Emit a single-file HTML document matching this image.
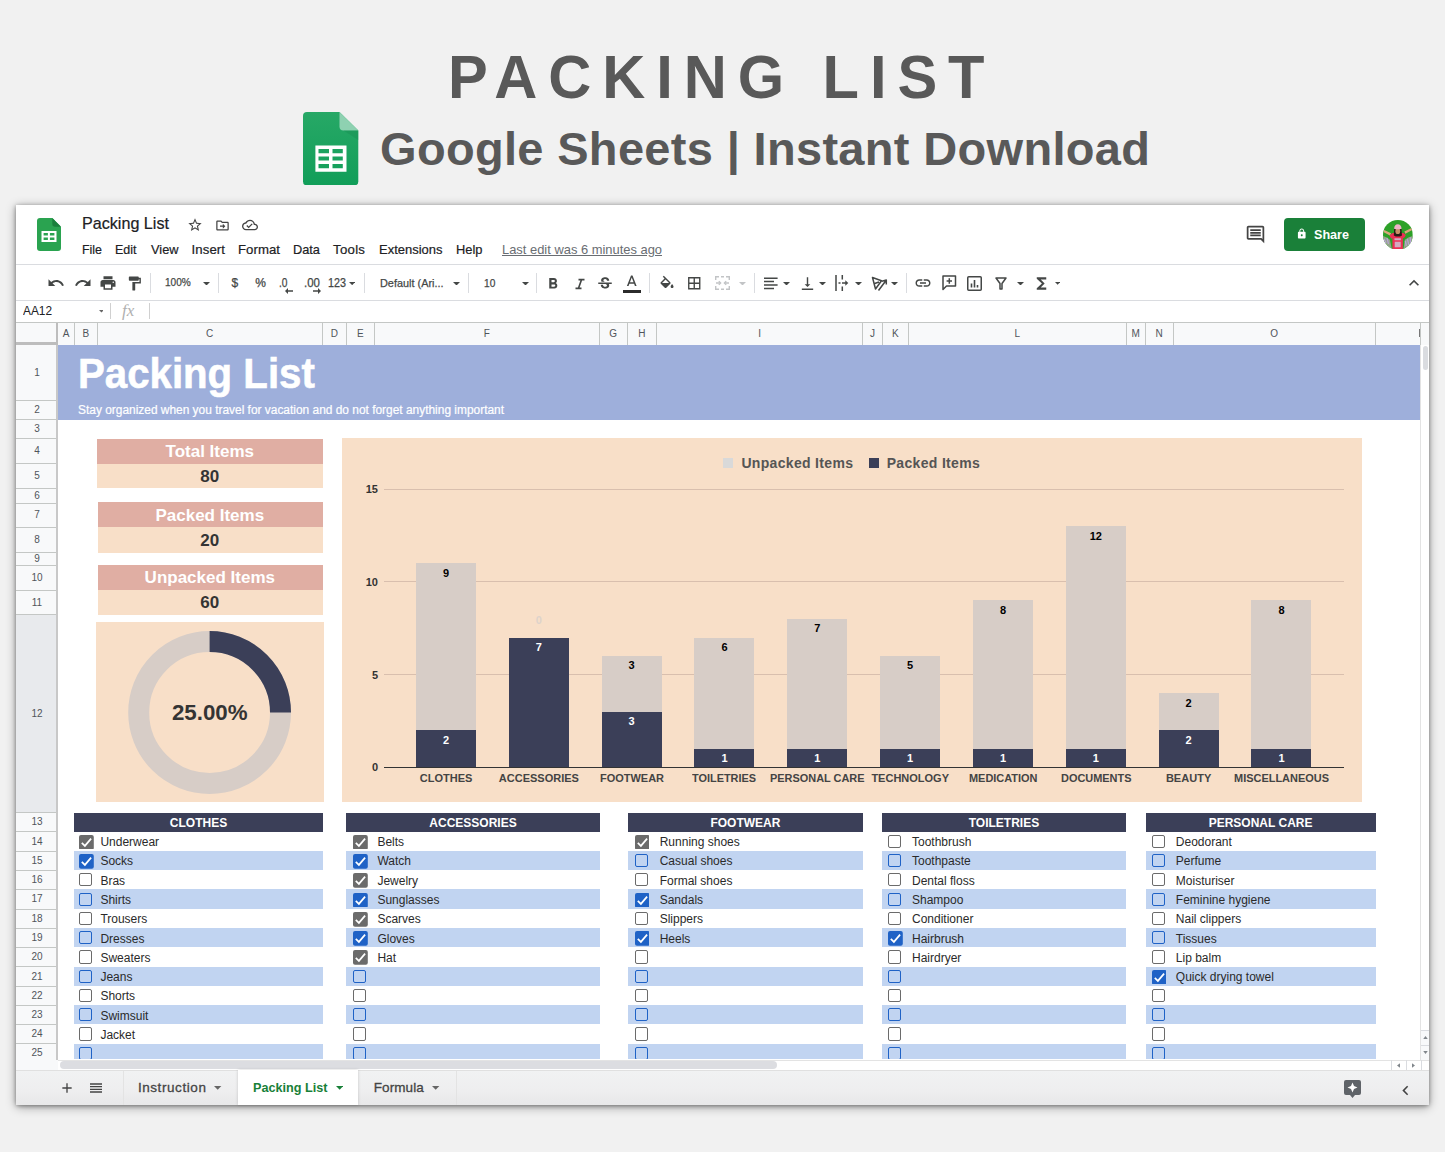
<!DOCTYPE html>
<html><head><meta charset="utf-8"><title>Packing List</title>
<style>
html,body{margin:0;padding:0}
body{width:1445px;height:1152px;position:relative;overflow:hidden;background:#f1f1f1;font-family:"Liberation Sans",Arial,sans-serif}
.t{position:absolute;white-space:nowrap;line-height:1}
.r{position:absolute}
</style></head><body>
<div class="t" style="top:47.39px;font-size:60.5px;color:#595959;font-weight:700;letter-spacing:11.117px;left:447.60px;transform:scaleX(0.9850);transform-origin:0 0;">PACKING LIST</div>
<div class="t" style="top:124.71px;font-size:47px;color:#595959;font-weight:700;letter-spacing:0.323px;left:380.00px;">Google Sheets | Instant Download</div>
<svg class="r" style="left:303.400px;top:111.600px" width="55.300" height="73.400" viewBox="0 0 55.300 73.400">
<defs><linearGradient id="gsh" x1="0" y1="0" x2="0" y2="1"><stop offset="0" stop-color="#27a866"/><stop offset="1" stop-color="#119e59"/></linearGradient></defs>
<path d="M4 0H36.500L55.300 18.500V69.400a4 4 0 0 1-4 4H4a4 4 0 0 1-4-4V4a4 4 0 0 1 4-4z" fill="url(#gsh)"/>
<path d="M36.500 0L55.300 18.500H40.500a4 4 0 0 1-4-4z" fill="#8ed1b1"/>
<path d="M40.500 18.500H55.300V28z" fill="#168a50" opacity=".35"/>
<path d="M12.400 33.400h31.100v26.400H12.400zM15.500 37.100v4.100h10.500v-4.100zm14 0v4.100h10.300v-4.100zM15.500 44.500v3.900h10.500v-3.900zm14 0v3.900h10.300v-3.900zM15.500 51.900v4.300h10.500v-4.300zm14 0v4.300h10.300v-4.300z" fill="#fff" fill-rule="evenodd"/>
</svg>
<div class="r" style="left:16px;top:205px;width:1413px;height:900px;background:#fff;border-radius:0 0 3px 3px;box-shadow:0 1px 4px rgba(0,0,0,.4),0 2px 11px rgba(0,0,0,.33)"></div>
<svg class="r" style="left:37px;top:218px" width="24" height="33" viewBox="0 0 24 33">
<path d="M3 0H15.300L24 8.700V30a3 3 0 0 1-3 3H3A3 3 0 0 1 0 30V3A3 3 0 0 1 3 0z" fill="#2aa350"/>
<path d="M15.300 0L24 8.700H18a2.700 2.700 0 0 1-2.700-2.700z" fill="#1a7f3c"/>
<path d="M4.500 13.100h15v10.800h-15zM6.600 14.900v2.500h4.300v-2.500zm6.300 0v2.500h4.500v-2.500zM6.600 19.400v2.500h4.300v-2.500zm6.300 0v2.500h4.500v-2.500z" fill="#fff" fill-rule="evenodd"/>
</svg>
<div class="t" style="top:216.45px;font-size:16.6px;color:#202124;left:82.00px;transform:scaleX(0.9721);transform-origin:0 0;-webkit-text-stroke:0.2px #202124;">Packing List</div>
<svg class="r" style="left:187.00px;top:217.00px;" width="16" height="16" viewBox="0 0 24 24" fill="#444" ><path d="M22 9.24l-7.19-.62L12 2 9.190 8.630 2 9.240l5.460 4.730L5.820 21 12 17.270 18.180 21l-1.630-7.030L22 9.240zM12 15.400l-3.760 2.270 1-4.280-3.320-2.880 4.380-.380L12 6.100l1.710 4.040 4.380.380-3.320 2.880 1 4.280L12 15.400z"/></svg>
<svg class="r" style="left:214.50px;top:217.50px;" width="15" height="15" viewBox="0 0 24 24" fill="#444" ><path d="M20 6h-8l-2-2H4c-1.100 0-2 .900-2 2v12c0 1.100.900 2 2 2h16c1.100 0 2-.900 2-2V8c0-1.100-.900-2-2-2zm0 12H4V6h5.170l2 2H20v10zm-7.500-1l4-4-4-4v3H8v2h4.500v3z"/></svg>
<svg class="r" style="left:242.00px;top:217.00px;" width="16" height="16" viewBox="0 0 24 24" fill="#444" ><path d="M19.350 10.040C18.670 6.590 15.640 4 12 4 9.110 4 6.600 5.640 5.350 8.040 2.340 8.360 0 10.910 0 14c0 3.310 2.690 6 6 6h13c2.760 0 5-2.240 5-5 0-2.640-2.050-4.780-4.650-4.960zM19 18H6c-2.210 0-4-1.790-4-4 0-2.050 1.530-3.760 3.560-3.970l1.070-.110.500-.950C8.080 7.140 9.940 6 12 6c2.620 0 4.880 1.860 5.390 4.430l.300 1.500 1.530.110c1.560.100 2.780 1.410 2.780 2.960 0 1.650-1.350 3-3 3zm-9-3.820l-2.090-2.090L6.500 13.500 10 17l6.010-6.010-1.410-1.410z"/></svg>
<div class="t" style="top:242.83px;font-size:13.2px;color:#202124;left:81.50px;transform:scaleX(0.9403);transform-origin:0 0;-webkit-text-stroke:0.2px #202124;">File</div>
<div class="t" style="top:242.83px;font-size:13.2px;color:#202124;left:115.00px;transform:scaleX(0.9452);transform-origin:0 0;-webkit-text-stroke:0.2px #202124;">Edit</div>
<div class="t" style="top:242.83px;font-size:13.2px;color:#202124;left:150.50px;transform:scaleX(0.9692);transform-origin:0 0;-webkit-text-stroke:0.2px #202124;">View</div>
<div class="t" style="top:242.83px;font-size:13.2px;color:#202124;letter-spacing:0.097px;left:191.50px;-webkit-text-stroke:0.2px #202124;">Insert</div>
<div class="t" style="top:242.83px;font-size:13.2px;color:#202124;letter-spacing:0.039px;left:238.00px;-webkit-text-stroke:0.2px #202124;">Format</div>
<div class="t" style="top:242.83px;font-size:13.2px;color:#202124;left:293.00px;transform:scaleX(0.9683);transform-origin:0 0;-webkit-text-stroke:0.2px #202124;">Data</div>
<div class="t" style="top:242.83px;font-size:13.2px;color:#202124;letter-spacing:0.296px;left:333.00px;-webkit-text-stroke:0.2px #202124;">Tools</div>
<div class="t" style="top:242.83px;font-size:13.2px;color:#202124;left:378.50px;transform:scaleX(0.9834);transform-origin:0 0;-webkit-text-stroke:0.2px #202124;">Extensions</div>
<div class="t" style="top:242.83px;font-size:13.2px;color:#202124;left:455.50px;transform:scaleX(0.9761);transform-origin:0 0;-webkit-text-stroke:0.2px #202124;">Help</div>
<div class="t" style="top:243.00px;font-size:13px;color:#696d72;left:502.00px;transform:scaleX(0.9929);transform-origin:0 0;text-decoration:underline;">Last edit was 6 minutes ago</div>
<svg class="r" style="left:1245.00px;top:223.50px;" width="21" height="21" viewBox="0 0 24 24" fill="#444" ><path d="M21.990 4c0-1.100-.890-2-1.990-2H4c-1.100 0-2 .900-2 2v12c0 1.100.900 2 2 2h14l4 4-.010-18zM20 4v13.170L18.830 16H4V4h16zM6 12h12v2H6zm0-3h12v2H6zm0-3h12v2H6z"/></svg>
<div class="r" style="left:1284px;top:218px;width:81px;height:33px;background:#1a8039;border-radius:4px"></div>
<svg class="r" style="left:1295.75px;top:228.25px;" width="11.5" height="11.5" viewBox="0 0 24 24" fill="#fff" ><path d="M18 8h-1V6c0-2.760-2.240-5-5-5S7 3.240 7 6v2H6c-1.100 0-2 .900-2 2v10c0 1.100.900 2 2 2h12c1.100 0 2-.900 2-2V10c0-1.100-.900-2-2-2zm-6 9c-1.100 0-2-.900-2-2s.900-2 2-2 2 .900 2 2-.900 2-2 2zm3.100-9H8.900V6c0-1.710 1.390-3.100 3.100-3.100 1.710 0 3.100 1.390 3.100 3.100v2z"/></svg>
<div class="t" style="top:227.57px;font-size:13.5px;color:#fff;font-weight:700;left:1313.50px;transform:scaleX(0.9328);transform-origin:0 0;">Share</div>
<svg class="r" style="left:1382.800px;top:219.700px" width="29.800" height="29.800" viewBox="0 0 30 30"><defs><clipPath id="av"><circle cx="15" cy="15" r="15"/></clipPath></defs>
<g clip-path="url(#av)"><rect width="30" height="30" fill="#2da128"/>
<path d="M0 16q4 1 7 4l2 10H0zM30 16q-5 1-8 4l-1.500 10H30z" fill="#93a58a"/>
<path d="M1 19l2 4M4 18l1.500 6M24.500 19l1.500 6M27.500 17.500l.500 6M22.500 21l1 5" stroke="#b9a3d6" stroke-width="1.300" fill="none"/>
<path d="M0.300 12.200l6.700 3.300 1.200-2.200-7-3.300zM29.500 10l-7 3.800-1-2.200 7.300-3.600z" fill="#d9a77c"/>
<path d="M6.500 15.500l3-2.300h11l2.500 2-2 3.300-1-.800V30H9.500V18l-1.200.800z" fill="#ee2f55"/>
<path d="M11.200 9h7.400l.500 6.500-2 1h-4.200l-2-1z" fill="#2a1d16"/>
<ellipse cx="14.900" cy="11.300" rx="2.400" ry="2.900" fill="#c98f66"/>
<path d="M11.200 8.800q.200-4.600 3.700-4.600t3.800 4.600q-3.800 1.200-7.500 0z" fill="#efb3c6"/>
<path d="M11.500 18.500h6.500v2h-6.500zM11.800 22h6v5.500h-6z" fill="#c9d6e6" opacity=".75"/>
</g></svg>
<div class="r" style="left:16.00px;top:264.00px;width:1413.00px;height:1.00px;background:#dadce0;"></div>
<div class="r" style="left:16.00px;top:299.70px;width:1413.00px;height:1.00px;background:#dadce0;"></div>
<div class="r" style="left:16.00px;top:321.50px;width:1413.00px;height:1.00px;background:#c4c7c5;"></div>
<svg class="r" style="left:47.20px;top:274.00px;" width="18" height="18" viewBox="0 0 24 24" fill="#444746" ><path d="M12.500 8c-2.650 0-5.050.990-6.900 2.600L2 7v9h9l-3.620-3.620c1.390-1.160 3.160-1.880 5.120-1.880 3.540 0 6.550 2.310 7.600 5.500l2.370-.780C21.080 11.030 17.150 8 12.500 8z"/></svg>
<svg class="r" style="left:73.90px;top:274.00px;" width="18" height="18" viewBox="0 0 24 24" fill="#444746" ><path d="M18.400 10.600C16.550 8.990 14.150 8 11.500 8c-4.650 0-8.580 3.030-9.960 7.220L3.900 16c1.050-3.190 4.050-5.500 7.600-5.500 1.950 0 3.730.720 5.120 1.880L13 16h9V7l-3.600 3.600z"/></svg>
<svg class="r" style="left:98.80px;top:274.00px;" width="18" height="18" viewBox="0 0 24 24" fill="#444746" ><path d="M19 8H5c-1.660 0-3 1.340-3 3v6h4v4h12v-4h4v-6c0-1.660-1.340-3-3-3zm-3 11H8v-5h8v5zm3-7c-.550 0-1-.450-1-1s.450-1 1-1 1 .450 1 1-.450 1-1 1zm-1-9H6v4h12V3z"/></svg>
<svg class="r" style="left:125.80px;top:274.50px;" width="17" height="17" viewBox="0 0 24 24" fill="#444746" ><path d="M18 4V3c0-.550-.450-1-1-1H5c-.550 0-1 .450-1 1v4c0 .550.450 1 1 1h12c.550 0 1-.450 1-1V6h1v4H9v11c0 .550.450 1 1 1h2c.550 0 1-.450 1-1v-9h8V4h-3z"/></svg>
<div class="r" style="left:149.90px;top:273.00px;width:1.00px;height:20.00px;background:#dadce0;"></div>
<div class="t" style="top:277.07px;font-size:11.5px;color:#444746;left:165.00px;transform:scaleX(0.8772);transform-origin:0 0;-webkit-text-stroke:0.25px #444746;">100%</div>
<svg class="r" style="left:203.20px;top:281.75px" width="7" height="3.5" viewBox="0 0 8 4"><path d="M0 0h8L4 4z" fill="#444746"/></svg>
<div class="r" style="left:217.70px;top:273.00px;width:1.00px;height:20.00px;background:#dadce0;"></div>
<div class="t" style="top:277.24px;font-size:12px;color:#444746;left:231.56px;-webkit-text-stroke:0.25px #444746;">$</div>
<div class="t" style="top:277.24px;font-size:12px;color:#444746;left:255.17px;-webkit-text-stroke:0.25px #444746;">%</div>
<div class="t" style="top:277.24px;font-size:12px;color:#444746;left:278.90px;transform:scaleX(0.8493);transform-origin:0 0;-webkit-text-stroke:0.25px #444746;">.0</div>
<div class="t" style="top:277.24px;font-size:12px;color:#444746;left:303.50px;transform:scaleX(0.9531);transform-origin:0 0;-webkit-text-stroke:0.25px #444746;">.00</div>
<svg class="r" style="left:284.5px;top:287.5px" width="8" height="6" viewBox="0 0 8 6"><path d="M3 0L0 3l3 3V3.700h5V2.300H3z" fill="#444746"/></svg>
<svg class="r" style="left:312.5px;top:287.5px" width="8" height="6" viewBox="0 0 8 6"><path d="M5 0l3 3-3 3V3.700H0V2.300h5z" fill="#444746"/></svg>
<div class="t" style="top:277.24px;font-size:12px;color:#444746;left:328.30px;transform:scaleX(0.8990);transform-origin:0 0;-webkit-text-stroke:0.25px #444746;">123</div>
<svg class="r" style="left:349.05px;top:281.93px" width="6.3" height="3.15" viewBox="0 0 8 4"><path d="M0 0h8L4 4z" fill="#444746"/></svg>
<div class="r" style="left:363.80px;top:273.00px;width:1.00px;height:20.00px;background:#dadce0;"></div>
<div class="t" style="top:277.67px;font-size:11.5px;color:#444746;left:379.70px;transform:scaleX(0.9463);transform-origin:0 0;-webkit-text-stroke:0.25px #444746;">Default (Ari...</div>
<svg class="r" style="left:453.00px;top:281.75px" width="7" height="3.5" viewBox="0 0 8 4"><path d="M0 0h8L4 4z" fill="#444746"/></svg>
<div class="r" style="left:468.30px;top:273.00px;width:1.00px;height:20.00px;background:#dadce0;"></div>
<div class="t" style="top:277.67px;font-size:11.5px;color:#444746;left:483.70px;transform:scaleX(0.8834);transform-origin:0 0;-webkit-text-stroke:0.25px #444746;">10</div>
<svg class="r" style="left:522.20px;top:281.75px" width="7" height="3.5" viewBox="0 0 8 4"><path d="M0 0h8L4 4z" fill="#444746"/></svg>
<div class="r" style="left:536.20px;top:273.00px;width:1.00px;height:20.00px;background:#dadce0;"></div>
<svg class="r" style="left:544.30px;top:274.50px;" width="18" height="18" viewBox="0 0 24 24" fill="#444746" ><path d="M15.600 10.790c.970-.670 1.650-1.770 1.650-2.790 0-2.260-1.750-4-4-4H7v14h7.040c2.090 0 3.710-1.700 3.710-3.790 0-1.520-.860-2.820-2.150-3.420zM10 6.500h3c.830 0 1.500.670 1.500 1.500s-.670 1.500-1.500 1.500h-3v-3zm3.500 9H10v-3h3.500c.830 0 1.500.670 1.500 1.500s-.670 1.500-1.500 1.500z"/></svg>
<svg class="r" style="left:570.50px;top:274.50px;" width="18" height="18" viewBox="0 0 24 24" fill="#444746" ><path d="M10 5v2.200h2.500l-3.300 9.600H6v2.200h8v-2.200h-2.500l3.300-9.600H18V5z"/></svg>
<svg class="r" style="left:596.00px;top:274.50px;" width="18" height="18" viewBox="0 0 24 24" fill="#444746" ><path d="M7.240 8.750c-.260-.480-.390-1.030-.390-1.670 0-.610.130-1.160.400-1.670.260-.500.630-.930 1.110-1.290.480-.350 1.050-.630 1.700-.830.660-.190 1.390-.290 2.180-.290.810 0 1.540.110 2.210.340.660.220 1.230.540 1.690.940.470.400.830.880 1.080 1.430.250.550.380 1.150.380 1.810h-3.010c0-.310-.050-.590-.150-.850-.090-.270-.240-.490-.440-.680-.200-.190-.450-.330-.750-.440-.300-.100-.660-.160-1.060-.160-.390 0-.740.040-1.030.130-.290.090-.530.210-.720.360-.190.160-.340.340-.440.550-.100.210-.150.430-.150.660 0 .480.250.880.740 1.210.380.250.770.480 1.410.700H7.390c-.050-.080-.110-.170-.150-.250zM21 12v-2H3v2h9.620c.180.070.400.140.550.200.370.170.660.340.870.510.210.170.350.360.430.570.070.200.110.430.110.690 0 .230-.050.450-.140.660-.090.200-.230.380-.420.530-.190.150-.420.260-.710.350-.290.080-.630.130-1.010.130-.430 0-.830-.040-1.180-.130s-.660-.230-.910-.420c-.250-.190-.450-.440-.590-.750-.140-.310-.250-.760-.250-1.210H6.400c0 .550.080 1.130.240 1.580.160.450.370.850.650 1.210.280.350.600.660.980.920.370.260.780.480 1.220.650.440.170.900.300 1.380.390.480.080.960.130 1.440.130.800 0 1.530-.090 2.180-.280s1.210-.450 1.670-.790c.460-.340.820-.770 1.070-1.270s.380-1.070.380-1.710c0-.600-.100-1.140-.310-1.610-.050-.110-.110-.230-.170-.330H21z"/></svg>
<svg class="r" style="left:624.85px;top:274.25px;" width="13.5" height="13.5" viewBox="3 1 18 18" fill="#444746" ><path d="M11 3L5.500 17h2.250l1.120-3h6.250l1.120 3h2.250L13 3h-2zm-1.380 9L12 5.670 14.380 12H9.620z"/></svg>
<div class="r" style="left:622.50px;top:290.30px;width:18.70px;height:3.00px;background:#2b2b2b;"></div>
<div class="r" style="left:649.40px;top:273.00px;width:1.00px;height:20.00px;background:#dadce0;"></div>
<svg class="r" style="left:659.00px;top:274.50px;" width="16" height="16" viewBox="1 -1 22 22" fill="#444746" ><path d="M16.560 8.940L7.620 0 6.210 1.410l2.380 2.380-5.150 5.150c-.590.590-.590 1.540 0 2.120l5.500 5.500c.290.290.680.440 1.060.440s.770-.150 1.060-.440l5.500-5.500c.590-.580.590-1.530 0-2.120zM5.210 10L10 5.210 14.790 10H5.210zM19 11.500s-2 2.170-2 3.500c0 1.100.900 2 2 2s2-.900 2-2c0-1.330-2-3.500-2-3.500z"/></svg>
<svg class="r" style="left:686.25px;top:274.75px;" width="16.5" height="16.5" viewBox="0 0 24 24" fill="#444746" ><path d="M3 3v18h18V3H3zm8 16H5v-6h6v6zm0-8H5V5h6v6zm8 8h-6v-6h6v6zm0-8h-6V5h6v6z"/></svg>
<svg class="r" style="left:715px;top:276px" width="15" height="14" viewBox="0 0 15 14" fill="none" stroke="#c2c4c6" stroke-width="1.400">
<path d="M0.700 4V0.700H4M6 0.700h3M11 0.700h3.300V4M0.700 10v3.300H4M6 13.300h3M11 13.300h3.300V10M1 7h4M14 7h-4"/><path d="M3.800 5.200L5.600 7 3.800 8.800M11.200 5.200L9.400 7l1.800 1.800" /></svg>
<svg class="r" style="left:739.30px;top:281.75px" width="7" height="3.5" viewBox="0 0 8 4"><path d="M0 0h8L4 4z" fill="#c2c4c6"/></svg>
<div class="r" style="left:754.00px;top:273.00px;width:1.00px;height:20.00px;background:#dadce0;"></div>
<svg class="r" style="left:764px;top:277px" width="14" height="13" viewBox="0 0 14 13" fill="none" stroke="#444746" stroke-width="1.500"><path d="M0 1.200h13.600M0 4.600h10M0 8h13.600M0 11.400h10"/></svg>
<svg class="r" style="left:783.10px;top:281.75px" width="7" height="3.5" viewBox="0 0 8 4"><path d="M0 0h8L4 4z" fill="#444746"/></svg>
<svg class="r" style="left:798.50px;top:274.50px;" width="17" height="17" viewBox="0 0 24 24" fill="#444746" ><path d="M16 13h-3V3h-2v10H8l4 4 4-4zM4 19v2h16v-2H4z"/></svg>
<svg class="r" style="left:818.90px;top:281.75px" width="7" height="3.5" viewBox="0 0 8 4"><path d="M0 0h8L4 4z" fill="#444746"/></svg>
<svg class="r" style="left:835px;top:275px" width="15" height="16" viewBox="0 0 15 16" fill="none" stroke="#444746" stroke-width="1.500">
<path d="M1 0v16M7.300 0v4.500M7.300 11.500V16M3.500 8h2M7 8h4"/><path d="M10.300 5.200L13.300 8l-3 2.800z" fill="#444746" stroke="none"/></svg>
<svg class="r" style="left:854.80px;top:281.75px" width="7" height="3.5" viewBox="0 0 8 4"><path d="M0 0h8L4 4z" fill="#444746"/></svg>
<svg class="r" style="left:870.500px;top:274.500px" width="17" height="17" viewBox="0 0 17 17" fill="none" stroke="#444746" stroke-width="1.500" stroke-linejoin="round">
<path d="M1.500 2.500l9 3.200-6 8.300zM3.700 8.500l4.300-1.500"/><path d="M7.500 15.500L15 5.500M15.300 9.500V5l-4.300 1.300"/></svg>
<svg class="r" style="left:890.60px;top:281.75px" width="7" height="3.5" viewBox="0 0 8 4"><path d="M0 0h8L4 4z" fill="#444746"/></svg>
<div class="r" style="left:905.60px;top:273.00px;width:1.00px;height:20.00px;background:#dadce0;"></div>
<svg class="r" style="left:914.20px;top:274.00px;" width="18" height="18" viewBox="0 0 24 24" fill="#444746" ><path d="M3.900 12c0-1.710 1.390-3.100 3.100-3.100h4V7H7c-2.760 0-5 2.240-5 5s2.240 5 5 5h4v-1.900H7c-1.710 0-3.100-1.390-3.100-3.100zM8 13h8v-2H8v2zm9-6h-4v1.900h4c1.710 0 3.100 1.390 3.100 3.100s-1.390 3.100-3.100 3.100h-4V17h4c2.760 0 5-2.240 5-5s-2.240-5-5-5z"/></svg>
<svg class="r" style="left:942px;top:275px" width="15" height="16" viewBox="0 0 15 16" fill="none" stroke="#444746" stroke-width="1.500" stroke-linejoin="round">
<path d="M1 1h12.500v10H4.500L1 14.500z"/><path d="M7.300 3.300v5.400M4.600 6h5.400"/></svg>
<svg class="r" style="left:967px;top:275.500px" width="15" height="15" viewBox="0 0 15 15" fill="none" stroke="#444746" stroke-width="1.500">
<rect x="0.750" y="0.750" width="13.500" height="13.500" rx="1"/><path d="M4.500 11.500V7.500M7.500 11.500V4M10.500 11.500V9" stroke-width="1.600"/></svg>
<svg class="r" style="left:995px;top:276.500px" width="12" height="13" viewBox="0 0 12 13" fill="none" stroke="#444746" stroke-width="1.500" stroke-linejoin="round">
<path d="M1 1h10L7 6.500v5.500H5V6.500z"/></svg>
<svg class="r" style="left:1017.40px;top:281.75px" width="7" height="3.5" viewBox="0 0 8 4"><path d="M0 0h8L4 4z" fill="#444746"/></svg>
<svg class="r" style="left:1031.80px;top:273.80px;" width="19" height="19" viewBox="0 0 24 24" fill="#444746" ><path d="M18 4H6v2l6.500 6L6 18v2h12v-3h-7l5-5-5-5h7z"/></svg>
<svg class="r" style="left:1054.58px;top:282.19px" width="5.25" height="2.625" viewBox="0 0 8 4"><path d="M0 0h8L4 4z" fill="#444746"/></svg>
<svg class="r" style="left:1404.00px;top:273.00px;" width="20" height="20" viewBox="0 0 24 24" fill="#444746" ><path d="M12 8l-6 6 1.410 1.410L12 10.830l4.590 4.580L18 14z"/></svg>
<div class="t" style="top:305.34px;font-size:12px;color:#202124;left:23.00px;transform:scaleX(0.9879);transform-origin:0 0;">AA12</div>
<svg class="r" style="left:98.55px;top:310.27px" width="4.9" height="2.45" viewBox="0 0 8 4"><path d="M0 0h8L4 4z" fill="#666"/></svg>
<div class="r" style="left:109.50px;top:303.00px;width:1.00px;height:16.00px;background:#d0d0d0;"></div>
<div class="t" style="top:302.11px;font-size:17px;color:#b0b0b0;left:122.00px;font-family:'Liberation Serif',serif;font-style:italic;">fx</div>
<div class="r" style="left:149.30px;top:303.00px;width:1.00px;height:16.00px;background:#d0d0d0;"></div>
<div class="r" style="left:16.00px;top:322.50px;width:1413.00px;height:22.00px;background:#f8f9fa;"></div>
<div class="r" style="left:73.80px;top:322.50px;width:1.00px;height:22.00px;background:#c4c7c5;"></div>
<div class="t" style="top:328.54px;font-size:10px;color:#50555a;left:62.82px;">A</div>
<div class="r" style="left:96.70px;top:322.50px;width:1.00px;height:22.00px;background:#c4c7c5;"></div>
<div class="t" style="top:328.54px;font-size:10px;color:#50555a;left:82.42px;">B</div>
<div class="r" style="left:321.70px;top:322.50px;width:1.00px;height:22.00px;background:#c4c7c5;"></div>
<div class="t" style="top:328.54px;font-size:10px;color:#50555a;left:206.09px;">C</div>
<div class="r" style="left:346.00px;top:322.50px;width:1.00px;height:22.00px;background:#c4c7c5;"></div>
<div class="t" style="top:328.54px;font-size:10px;color:#50555a;left:330.74px;">D</div>
<div class="r" style="left:373.70px;top:322.50px;width:1.00px;height:22.00px;background:#c4c7c5;"></div>
<div class="t" style="top:328.54px;font-size:10px;color:#50555a;left:357.02px;">E</div>
<div class="r" style="left:598.90px;top:322.50px;width:1.00px;height:22.00px;background:#c4c7c5;"></div>
<div class="t" style="top:328.54px;font-size:10px;color:#50555a;left:483.75px;">F</div>
<div class="r" style="left:626.50px;top:322.50px;width:1.00px;height:22.00px;background:#c4c7c5;"></div>
<div class="t" style="top:328.54px;font-size:10px;color:#50555a;left:609.31px;">G</div>
<div class="r" style="left:656.10px;top:322.50px;width:1.00px;height:22.00px;background:#c4c7c5;"></div>
<div class="t" style="top:328.54px;font-size:10px;color:#50555a;left:638.19px;">H</div>
<div class="r" style="left:862.30px;top:322.50px;width:1.00px;height:22.00px;background:#c4c7c5;"></div>
<div class="t" style="top:328.54px;font-size:10px;color:#50555a;left:758.31px;">I</div>
<div class="r" style="left:881.70px;top:322.50px;width:1.00px;height:22.00px;background:#c4c7c5;"></div>
<div class="t" style="top:328.54px;font-size:10px;color:#50555a;left:870.00px;">J</div>
<div class="r" style="left:908.10px;top:322.50px;width:1.00px;height:22.00px;background:#c4c7c5;"></div>
<div class="t" style="top:328.54px;font-size:10px;color:#50555a;left:892.07px;">K</div>
<div class="r" style="left:1125.50px;top:322.50px;width:1.00px;height:22.00px;background:#c4c7c5;"></div>
<div class="t" style="top:328.54px;font-size:10px;color:#50555a;left:1014.52px;">L</div>
<div class="r" style="left:1144.90px;top:322.50px;width:1.00px;height:22.00px;background:#c4c7c5;"></div>
<div class="t" style="top:328.54px;font-size:10px;color:#50555a;left:1131.53px;">M</div>
<div class="r" style="left:1172.50px;top:322.50px;width:1.00px;height:22.00px;background:#c4c7c5;"></div>
<div class="t" style="top:328.54px;font-size:10px;color:#50555a;left:1155.59px;">N</div>
<div class="r" style="left:1374.90px;top:322.50px;width:1.00px;height:22.00px;background:#c4c7c5;"></div>
<div class="t" style="top:328.54px;font-size:10px;color:#50555a;left:1270.31px;">O</div>
<div class="r" style="left:1420.00px;top:322.50px;width:1.00px;height:22.00px;background:#c4c7c5;"></div>
<div class="r" style="left:1418.50px;top:329.00px;width:1.00px;height:8.00px;background:#777;"></div>
<div class="r" style="left:16.00px;top:344.50px;width:40.00px;height:715.00px;background:#f8f9fa;"></div>
<div class="r" style="left:16.00px;top:400.00px;width:40.00px;height:1.00px;background:#c4c7c5;"></div>
<div class="t" style="top:367.64px;font-size:10px;color:#50555a;left:34.22px;">1</div>
<div class="r" style="left:16.00px;top:419.30px;width:40.00px;height:1.00px;background:#c4c7c5;"></div>
<div class="t" style="top:405.29px;font-size:10px;color:#50555a;left:34.22px;">2</div>
<div class="r" style="left:16.00px;top:437.70px;width:40.00px;height:1.00px;background:#c4c7c5;"></div>
<div class="t" style="top:424.14px;font-size:10px;color:#50555a;left:34.22px;">3</div>
<div class="r" style="left:16.00px;top:462.90px;width:40.00px;height:1.00px;background:#c4c7c5;"></div>
<div class="t" style="top:445.94px;font-size:10px;color:#50555a;left:34.22px;">4</div>
<div class="r" style="left:16.00px;top:488.00px;width:40.00px;height:1.00px;background:#c4c7c5;"></div>
<div class="t" style="top:471.09px;font-size:10px;color:#50555a;left:34.22px;">5</div>
<div class="r" style="left:16.00px;top:502.50px;width:40.00px;height:1.00px;background:#c4c7c5;"></div>
<div class="t" style="top:490.89px;font-size:10px;color:#50555a;left:34.22px;">6</div>
<div class="r" style="left:16.00px;top:527.10px;width:40.00px;height:1.00px;background:#c4c7c5;"></div>
<div class="t" style="top:510.44px;font-size:10px;color:#50555a;left:34.22px;">7</div>
<div class="r" style="left:16.00px;top:552.20px;width:40.00px;height:1.00px;background:#c4c7c5;"></div>
<div class="t" style="top:535.29px;font-size:10px;color:#50555a;left:34.22px;">8</div>
<div class="r" style="left:16.00px;top:564.70px;width:40.00px;height:1.00px;background:#c4c7c5;"></div>
<div class="t" style="top:554.09px;font-size:10px;color:#50555a;left:34.22px;">9</div>
<div class="r" style="left:16.00px;top:589.50px;width:40.00px;height:1.00px;background:#c4c7c5;"></div>
<div class="t" style="top:572.74px;font-size:10px;color:#50555a;left:31.44px;">10</div>
<div class="r" style="left:16.00px;top:614.30px;width:40.00px;height:1.00px;background:#c4c7c5;"></div>
<div class="t" style="top:597.53px;font-size:10px;color:#50555a;left:31.81px;">11</div>
<div class="r" style="left:16.00px;top:614.80px;width:40.00px;height:197.80px;background:#e8eaed;"></div>
<div class="r" style="left:16.00px;top:812.10px;width:40.00px;height:1.00px;background:#c4c7c5;"></div>
<div class="t" style="top:708.84px;font-size:10px;color:#50555a;left:31.44px;">12</div>
<div class="r" style="left:16.00px;top:831.38px;width:40.00px;height:1.00px;background:#c4c7c5;"></div>
<div class="t" style="top:817.38px;font-size:10px;color:#50555a;left:31.44px;">13</div>
<div class="r" style="left:16.00px;top:850.66px;width:40.00px;height:1.00px;background:#c4c7c5;"></div>
<div class="t" style="top:836.65px;font-size:10px;color:#50555a;left:31.44px;">14</div>
<div class="r" style="left:16.00px;top:869.94px;width:40.00px;height:1.00px;background:#c4c7c5;"></div>
<div class="t" style="top:855.93px;font-size:10px;color:#50555a;left:31.44px;">15</div>
<div class="r" style="left:16.00px;top:889.22px;width:40.00px;height:1.00px;background:#c4c7c5;"></div>
<div class="t" style="top:875.21px;font-size:10px;color:#50555a;left:31.44px;">16</div>
<div class="r" style="left:16.00px;top:908.50px;width:40.00px;height:1.00px;background:#c4c7c5;"></div>
<div class="t" style="top:894.49px;font-size:10px;color:#50555a;left:31.44px;">17</div>
<div class="r" style="left:16.00px;top:927.78px;width:40.00px;height:1.00px;background:#c4c7c5;"></div>
<div class="t" style="top:913.77px;font-size:10px;color:#50555a;left:31.44px;">18</div>
<div class="r" style="left:16.00px;top:947.06px;width:40.00px;height:1.00px;background:#c4c7c5;"></div>
<div class="t" style="top:933.05px;font-size:10px;color:#50555a;left:31.44px;">19</div>
<div class="r" style="left:16.00px;top:966.34px;width:40.00px;height:1.00px;background:#c4c7c5;"></div>
<div class="t" style="top:952.33px;font-size:10px;color:#50555a;left:31.44px;">20</div>
<div class="r" style="left:16.00px;top:985.62px;width:40.00px;height:1.00px;background:#c4c7c5;"></div>
<div class="t" style="top:971.61px;font-size:10px;color:#50555a;left:31.44px;">21</div>
<div class="r" style="left:16.00px;top:1004.90px;width:40.00px;height:1.00px;background:#c4c7c5;"></div>
<div class="t" style="top:990.89px;font-size:10px;color:#50555a;left:31.44px;">22</div>
<div class="r" style="left:16.00px;top:1024.18px;width:40.00px;height:1.00px;background:#c4c7c5;"></div>
<div class="t" style="top:1010.17px;font-size:10px;color:#50555a;left:31.44px;">23</div>
<div class="r" style="left:16.00px;top:1043.46px;width:40.00px;height:1.00px;background:#c4c7c5;"></div>
<div class="t" style="top:1029.45px;font-size:10px;color:#50555a;left:31.44px;">24</div>
<div class="t" style="top:1047.84px;font-size:10px;color:#50555a;left:31.44px;">25</div>
<div class="r" style="left:16.00px;top:322.50px;width:42.00px;height:22.00px;background:#f8f9fa;"></div>
<div class="r" style="left:55.50px;top:322.50px;width:2.50px;height:737.00px;background:#bdbdbd;"></div>
<div class="r" style="left:16.00px;top:342.00px;width:42.00px;height:2.50px;background:#bdbdbd;"></div>
<div class="r" style="left:55.50px;top:344.50px;width:2.50px;height:715.00px;background:#c8c8c8;"></div>
<div class="r" style="left:58.00px;top:344.50px;width:1362.50px;height:75.30px;background:#9eafdb;"></div>
<div class="t" style="top:351.90px;font-size:43px;color:#fff;font-weight:700;left:78.40px;transform:scaleX(0.9349);transform-origin:0 0;-webkit-text-stroke:0.6px #fff;">Packing List</div>
<div class="t" style="top:404.44px;font-size:12px;color:#fff;left:77.50px;transform:scaleX(0.9932);transform-origin:0 0;-webkit-text-stroke:0.2px #fff;">Stay organized when you travel for vacation and do not forget anything important</div>
<div class="r" style="left:97.00px;top:439.30px;width:226.30px;height:24.50px;background:#e0aea3;"></div>
<div class="r" style="left:97.00px;top:463.80px;width:226.30px;height:24.70px;background:#f8dfc8;"></div>
<div class="t" style="top:443.11px;font-size:17px;color:#fff;font-weight:700;left:165.56px;">Total Items</div>
<div class="t" style="top:467.81px;font-size:17px;color:#343434;font-weight:700;left:200.35px;">80</div>
<div class="r" style="left:97.80px;top:502.40px;width:225.50px;height:24.80px;background:#e0aea3;"></div>
<div class="r" style="left:97.80px;top:527.20px;width:225.50px;height:25.40px;background:#f8dfc8;"></div>
<div class="t" style="top:506.51px;font-size:17px;color:#fff;font-weight:700;left:155.46px;">Packed Items</div>
<div class="t" style="top:531.91px;font-size:17px;color:#343434;font-weight:700;left:200.35px;">20</div>
<div class="r" style="left:97.80px;top:564.80px;width:225.50px;height:24.90px;background:#e0aea3;"></div>
<div class="r" style="left:97.80px;top:589.70px;width:225.50px;height:25.10px;background:#f8dfc8;"></div>
<div class="t" style="top:569.01px;font-size:17px;color:#fff;font-weight:700;left:144.61px;">Unpacked Items</div>
<div class="t" style="top:594.11px;font-size:17px;color:#343434;font-weight:700;left:200.35px;">60</div>
<div class="r" style="left:96.20px;top:622.00px;width:227.50px;height:179.50px;background:#f8dfc8;"></div>
<svg class="r" style="left:96.200px;top:622px" width="227.500" height="179.500" viewBox="96.200 622 227.500 179.500">
<circle cx="209.800" cy="712.500" r="70.900" fill="none" stroke="#d7cdc7" stroke-width="21"/>
<path d="M209.800 641.600A70.900 70.900 0 0 1 280.700 712.500" fill="none" stroke="#3b3f58" stroke-width="21"/></svg>
<div class="t" style="top:701.92px;font-size:22.3px;color:#343434;font-weight:700;left:171.98px;">25.00%</div>
<div class="r" style="left:341.80px;top:438.00px;width:1020.20px;height:363.50px;background:#f8dfc8;"></div>
<div class="r" style="left:384.00px;top:674.20px;width:959.80px;height:1.00px;background:#d9bfae;"></div>
<div class="r" style="left:384.00px;top:581.40px;width:959.80px;height:1.00px;background:#d9bfae;"></div>
<div class="r" style="left:384.00px;top:488.60px;width:959.80px;height:1.00px;background:#d9bfae;"></div>
<div class="t" style="top:762.39px;font-size:11px;color:#333;font-weight:700;left:371.88px;">0</div>
<div class="t" style="top:669.59px;font-size:11px;color:#333;font-weight:700;left:371.88px;">5</div>
<div class="t" style="top:576.79px;font-size:11px;color:#333;font-weight:700;left:365.76px;">10</div>
<div class="t" style="top:483.99px;font-size:11px;color:#333;font-weight:700;left:365.76px;">15</div>
<div class="r" style="left:416.00px;top:563.34px;width:60.00px;height:167.04px;background:#d7cdc7;"></div>
<div class="t" style="top:567.63px;font-size:11px;color:#000;font-weight:700;left:442.94px;">9</div>
<div class="r" style="left:416.00px;top:730.38px;width:60.00px;height:37.12px;background:#3b3f58;"></div>
<div class="t" style="top:734.67px;font-size:11px;color:#fff;font-weight:700;left:442.94px;">2</div>
<div class="t" style="top:772.69px;font-size:11px;color:#444;font-weight:700;left:419.75px;">CLOTHES</div>
<div class="t" style="top:615.07px;font-size:11px;color:#ded3cb;font-weight:700;left:535.77px;">0</div>
<div class="r" style="left:508.83px;top:637.58px;width:60.00px;height:129.92px;background:#3b3f58;"></div>
<div class="t" style="top:641.87px;font-size:11px;color:#fff;font-weight:700;left:535.77px;">7</div>
<div class="t" style="top:772.69px;font-size:11px;color:#444;font-weight:700;left:498.83px;">ACCESSORIES</div>
<div class="r" style="left:601.66px;top:656.14px;width:60.00px;height:55.68px;background:#d7cdc7;"></div>
<div class="t" style="top:660.43px;font-size:11px;color:#000;font-weight:700;left:628.60px;">3</div>
<div class="r" style="left:601.66px;top:711.82px;width:60.00px;height:55.68px;background:#3b3f58;"></div>
<div class="t" style="top:716.11px;font-size:11px;color:#fff;font-weight:700;left:628.60px;">3</div>
<div class="t" style="top:772.69px;font-size:11px;color:#444;font-weight:700;left:599.66px;transform:scaleX(0.9975);transform-origin:0 0;">FOOTWEAR</div>
<div class="r" style="left:694.49px;top:637.58px;width:60.00px;height:111.36px;background:#d7cdc7;"></div>
<div class="t" style="top:641.87px;font-size:11px;color:#000;font-weight:700;left:721.43px;">6</div>
<div class="r" style="left:694.49px;top:748.94px;width:60.00px;height:18.56px;background:#3b3f58;"></div>
<div class="t" style="top:753.23px;font-size:11px;color:#fff;font-weight:700;left:721.43px;">1</div>
<div class="t" style="top:772.69px;font-size:11px;color:#444;font-weight:700;left:692.49px;transform:scaleX(0.9910);transform-origin:0 0;">TOILETRIES</div>
<div class="r" style="left:787.32px;top:619.02px;width:60.00px;height:129.92px;background:#d7cdc7;"></div>
<div class="t" style="top:623.31px;font-size:11px;color:#000;font-weight:700;left:814.26px;">7</div>
<div class="r" style="left:787.32px;top:748.94px;width:60.00px;height:18.56px;background:#3b3f58;"></div>
<div class="t" style="top:753.23px;font-size:11px;color:#fff;font-weight:700;left:814.26px;">1</div>
<div class="t" style="top:772.69px;font-size:11px;color:#444;font-weight:700;left:770.07px;transform:scaleX(0.9932);transform-origin:0 0;">PERSONAL CARE</div>
<div class="r" style="left:880.15px;top:656.14px;width:60.00px;height:92.80px;background:#d7cdc7;"></div>
<div class="t" style="top:660.43px;font-size:11px;color:#000;font-weight:700;left:907.09px;">5</div>
<div class="r" style="left:880.15px;top:748.94px;width:60.00px;height:18.56px;background:#3b3f58;"></div>
<div class="t" style="top:753.23px;font-size:11px;color:#fff;font-weight:700;left:907.09px;">1</div>
<div class="t" style="top:772.69px;font-size:11px;color:#444;font-weight:700;left:871.40px;">TECHNOLOGY</div>
<div class="r" style="left:972.98px;top:600.46px;width:60.00px;height:148.48px;background:#d7cdc7;"></div>
<div class="t" style="top:604.75px;font-size:11px;color:#000;font-weight:700;left:999.92px;">8</div>
<div class="r" style="left:972.98px;top:748.94px;width:60.00px;height:18.56px;background:#3b3f58;"></div>
<div class="t" style="top:753.23px;font-size:11px;color:#fff;font-weight:700;left:999.92px;">1</div>
<div class="t" style="top:772.69px;font-size:11px;color:#444;font-weight:700;left:968.73px;transform:scaleX(0.9950);transform-origin:0 0;">MEDICATION</div>
<div class="r" style="left:1065.81px;top:526.22px;width:60.00px;height:222.72px;background:#d7cdc7;"></div>
<div class="t" style="top:530.51px;font-size:11px;color:#000;font-weight:700;left:1089.69px;">12</div>
<div class="r" style="left:1065.81px;top:748.94px;width:60.00px;height:18.56px;background:#3b3f58;"></div>
<div class="t" style="top:753.23px;font-size:11px;color:#fff;font-weight:700;left:1092.75px;">1</div>
<div class="t" style="top:772.69px;font-size:11px;color:#444;font-weight:700;left:1060.56px;transform:scaleX(0.9945);transform-origin:0 0;">DOCUMENTS</div>
<div class="r" style="left:1158.64px;top:693.26px;width:60.00px;height:37.12px;background:#d7cdc7;"></div>
<div class="t" style="top:697.55px;font-size:11px;color:#000;font-weight:700;left:1185.58px;">2</div>
<div class="r" style="left:1158.64px;top:730.38px;width:60.00px;height:37.12px;background:#3b3f58;"></div>
<div class="t" style="top:734.67px;font-size:11px;color:#fff;font-weight:700;left:1185.58px;">2</div>
<div class="t" style="top:772.69px;font-size:11px;color:#444;font-weight:700;letter-spacing:0.055px;left:1165.89px;">BEAUTY</div>
<div class="r" style="left:1251.47px;top:600.46px;width:60.00px;height:148.48px;background:#d7cdc7;"></div>
<div class="t" style="top:604.75px;font-size:11px;color:#000;font-weight:700;left:1278.41px;">8</div>
<div class="r" style="left:1251.47px;top:748.94px;width:60.00px;height:18.56px;background:#3b3f58;"></div>
<div class="t" style="top:753.23px;font-size:11px;color:#fff;font-weight:700;left:1278.41px;">1</div>
<div class="t" style="top:772.69px;font-size:11px;color:#444;font-weight:700;left:1233.97px;transform:scaleX(0.9965);transform-origin:0 0;">MISCELLANEOUS</div>
<div class="r" style="left:384.00px;top:766.80px;width:959.80px;height:1.40px;background:#333;"></div>
<div class="r" style="left:723.30px;top:458.30px;width:10.20px;height:10.20px;background:#d9d9d9;"></div>
<div class="t" style="top:456.35px;font-size:14px;color:#555;font-weight:700;letter-spacing:0.325px;left:741.40px;">Unpacked Items</div>
<div class="r" style="left:868.90px;top:458.30px;width:10.20px;height:10.20px;background:#3b3f58;"></div>
<div class="t" style="top:456.35px;font-size:14px;color:#555;font-weight:700;letter-spacing:0.328px;left:886.70px;">Packed Items</div>
<div class="r" style="left:58px;top:812.60px;width:1362.500px;height:246.90px;overflow:hidden">
<div class="r" style="left:16.00px;top:-0.20px;width:249.00px;height:19.10px;background:#3b3f58;"></div>
<div class="t" style="top:4.04px;font-size:12px;color:#fff;font-weight:700;left:111.83px;">CLOTHES</div>
<svg class="r" style="left:20.80px;top:22.08px" width="14.800" height="14.800" viewBox="0 0 14.800 14.800"><rect width="14.800" height="14.800" rx="2" fill="#6b6b6b"/><path d="M2.800 7.800l3.100 3.100 6.200-7.300" fill="none" stroke="#fff" stroke-width="1.700"/></svg>
<div class="t" style="top:23.62px;font-size:12px;color:#2a2a2a;left:42.40px;">Underwear</div>
<div class="r" style="left:16.00px;top:38.26px;width:249.00px;height:19.28px;background:#c1d4f1;"></div>
<svg class="r" style="left:20.80px;top:41.36px" width="14.800" height="14.800" viewBox="0 0 14.800 14.800"><rect width="14.800" height="14.800" rx="2" fill="#1f62c6"/><path d="M2.800 7.800l3.100 3.100 6.200-7.300" fill="none" stroke="#fff" stroke-width="1.700"/></svg>
<div class="t" style="top:42.90px;font-size:12px;color:#2a2a2a;left:42.40px;">Socks</div>
<div class="r" style="left:20.80px;top:60.64px;width:11.200px;height:11.200px;border:1.800px solid #6b6b6b;border-radius:2px;background:#fff"></div>
<div class="t" style="top:62.18px;font-size:12px;color:#2a2a2a;left:42.40px;">Bras</div>
<div class="r" style="left:16.00px;top:76.82px;width:249.00px;height:19.28px;background:#c1d4f1;"></div>
<div class="r" style="left:20.80px;top:79.92px;width:11.200px;height:11.200px;border:1.800px solid #1f62c6;border-radius:2px;background:transparent"></div>
<div class="t" style="top:81.46px;font-size:12px;color:#2a2a2a;left:42.40px;">Shirts</div>
<div class="r" style="left:20.80px;top:99.20px;width:11.200px;height:11.200px;border:1.800px solid #6b6b6b;border-radius:2px;background:#fff"></div>
<div class="t" style="top:100.74px;font-size:12px;color:#2a2a2a;left:42.40px;">Trousers</div>
<div class="r" style="left:16.00px;top:115.38px;width:249.00px;height:19.28px;background:#c1d4f1;"></div>
<div class="r" style="left:20.80px;top:118.48px;width:11.200px;height:11.200px;border:1.800px solid #1f62c6;border-radius:2px;background:transparent"></div>
<div class="t" style="top:120.02px;font-size:12px;color:#2a2a2a;left:42.40px;">Dresses</div>
<div class="r" style="left:20.80px;top:137.76px;width:11.200px;height:11.200px;border:1.800px solid #6b6b6b;border-radius:2px;background:#fff"></div>
<div class="t" style="top:139.30px;font-size:12px;color:#2a2a2a;left:42.40px;">Sweaters</div>
<div class="r" style="left:16.00px;top:153.94px;width:249.00px;height:19.28px;background:#c1d4f1;"></div>
<div class="r" style="left:20.80px;top:157.04px;width:11.200px;height:11.200px;border:1.800px solid #1f62c6;border-radius:2px;background:transparent"></div>
<div class="t" style="top:158.58px;font-size:12px;color:#2a2a2a;left:42.40px;">Jeans</div>
<div class="r" style="left:20.80px;top:176.32px;width:11.200px;height:11.200px;border:1.800px solid #6b6b6b;border-radius:2px;background:#fff"></div>
<div class="t" style="top:177.86px;font-size:12px;color:#2a2a2a;left:42.40px;">Shorts</div>
<div class="r" style="left:16.00px;top:192.50px;width:249.00px;height:19.28px;background:#c1d4f1;"></div>
<div class="r" style="left:20.80px;top:195.60px;width:11.200px;height:11.200px;border:1.800px solid #1f62c6;border-radius:2px;background:transparent"></div>
<div class="t" style="top:197.14px;font-size:12px;color:#2a2a2a;left:42.40px;">Swimsuit</div>
<div class="r" style="left:20.80px;top:214.88px;width:11.200px;height:11.200px;border:1.800px solid #6b6b6b;border-radius:2px;background:#fff"></div>
<div class="t" style="top:216.42px;font-size:12px;color:#2a2a2a;left:42.40px;">Jacket</div>
<div class="r" style="left:16.00px;top:231.06px;width:249.00px;height:19.28px;background:#c1d4f1;"></div>
<div class="r" style="left:20.80px;top:234.16px;width:11.200px;height:11.200px;border:1.800px solid #1f62c6;border-radius:2px;background:transparent"></div>
<div class="r" style="left:288.30px;top:-0.20px;width:253.50px;height:19.10px;background:#3b3f58;"></div>
<div class="t" style="top:4.04px;font-size:12px;color:#fff;font-weight:700;left:371.37px;">ACCESSORIES</div>
<svg class="r" style="left:295.10px;top:22.08px" width="14.800" height="14.800" viewBox="0 0 14.800 14.800"><rect width="14.800" height="14.800" rx="2" fill="#6b6b6b"/><path d="M2.800 7.800l3.100 3.100 6.200-7.300" fill="none" stroke="#fff" stroke-width="1.700"/></svg>
<div class="t" style="top:23.62px;font-size:12px;color:#2a2a2a;left:319.40px;">Belts</div>
<div class="r" style="left:288.30px;top:38.26px;width:253.50px;height:19.28px;background:#c1d4f1;"></div>
<svg class="r" style="left:295.10px;top:41.36px" width="14.800" height="14.800" viewBox="0 0 14.800 14.800"><rect width="14.800" height="14.800" rx="2" fill="#1f62c6"/><path d="M2.800 7.800l3.100 3.100 6.200-7.300" fill="none" stroke="#fff" stroke-width="1.700"/></svg>
<div class="t" style="top:42.90px;font-size:12px;color:#2a2a2a;left:319.40px;">Watch</div>
<svg class="r" style="left:295.10px;top:60.64px" width="14.800" height="14.800" viewBox="0 0 14.800 14.800"><rect width="14.800" height="14.800" rx="2" fill="#6b6b6b"/><path d="M2.800 7.800l3.100 3.100 6.200-7.300" fill="none" stroke="#fff" stroke-width="1.700"/></svg>
<div class="t" style="top:62.18px;font-size:12px;color:#2a2a2a;left:319.40px;">Jewelry</div>
<div class="r" style="left:288.30px;top:76.82px;width:253.50px;height:19.28px;background:#c1d4f1;"></div>
<svg class="r" style="left:295.10px;top:79.92px" width="14.800" height="14.800" viewBox="0 0 14.800 14.800"><rect width="14.800" height="14.800" rx="2" fill="#1f62c6"/><path d="M2.800 7.800l3.100 3.100 6.200-7.300" fill="none" stroke="#fff" stroke-width="1.700"/></svg>
<div class="t" style="top:81.46px;font-size:12px;color:#2a2a2a;left:319.40px;">Sunglasses</div>
<svg class="r" style="left:295.10px;top:99.20px" width="14.800" height="14.800" viewBox="0 0 14.800 14.800"><rect width="14.800" height="14.800" rx="2" fill="#6b6b6b"/><path d="M2.800 7.800l3.100 3.100 6.200-7.300" fill="none" stroke="#fff" stroke-width="1.700"/></svg>
<div class="t" style="top:100.74px;font-size:12px;color:#2a2a2a;left:319.40px;">Scarves</div>
<div class="r" style="left:288.30px;top:115.38px;width:253.50px;height:19.28px;background:#c1d4f1;"></div>
<svg class="r" style="left:295.10px;top:118.48px" width="14.800" height="14.800" viewBox="0 0 14.800 14.800"><rect width="14.800" height="14.800" rx="2" fill="#1f62c6"/><path d="M2.800 7.800l3.100 3.100 6.200-7.300" fill="none" stroke="#fff" stroke-width="1.700"/></svg>
<div class="t" style="top:120.02px;font-size:12px;color:#2a2a2a;left:319.40px;">Gloves</div>
<svg class="r" style="left:295.10px;top:137.76px" width="14.800" height="14.800" viewBox="0 0 14.800 14.800"><rect width="14.800" height="14.800" rx="2" fill="#6b6b6b"/><path d="M2.800 7.800l3.100 3.100 6.200-7.300" fill="none" stroke="#fff" stroke-width="1.700"/></svg>
<div class="t" style="top:139.30px;font-size:12px;color:#2a2a2a;left:319.40px;">Hat</div>
<div class="r" style="left:288.30px;top:153.94px;width:253.50px;height:19.28px;background:#c1d4f1;"></div>
<div class="r" style="left:295.10px;top:157.04px;width:11.200px;height:11.200px;border:1.800px solid #1f62c6;border-radius:2px;background:transparent"></div>
<div class="r" style="left:295.10px;top:176.32px;width:11.200px;height:11.200px;border:1.800px solid #6b6b6b;border-radius:2px;background:#fff"></div>
<div class="r" style="left:288.30px;top:192.50px;width:253.50px;height:19.28px;background:#c1d4f1;"></div>
<div class="r" style="left:295.10px;top:195.60px;width:11.200px;height:11.200px;border:1.800px solid #1f62c6;border-radius:2px;background:transparent"></div>
<div class="r" style="left:295.10px;top:214.88px;width:11.200px;height:11.200px;border:1.800px solid #6b6b6b;border-radius:2px;background:#fff"></div>
<div class="r" style="left:288.30px;top:231.06px;width:253.50px;height:19.28px;background:#c1d4f1;"></div>
<div class="r" style="left:295.10px;top:234.16px;width:11.200px;height:11.200px;border:1.800px solid #1f62c6;border-radius:2px;background:transparent"></div>
<div class="r" style="left:569.80px;top:-0.20px;width:235.20px;height:19.10px;background:#3b3f58;"></div>
<div class="t" style="top:4.04px;font-size:12px;color:#fff;font-weight:700;left:652.40px;">FOOTWEAR</div>
<svg class="r" style="left:576.60px;top:22.08px" width="14.800" height="14.800" viewBox="0 0 14.800 14.800"><rect width="14.800" height="14.800" rx="2" fill="#6b6b6b"/><path d="M2.800 7.800l3.100 3.100 6.200-7.300" fill="none" stroke="#fff" stroke-width="1.700"/></svg>
<div class="t" style="top:23.62px;font-size:12px;color:#2a2a2a;left:601.70px;">Running shoes</div>
<div class="r" style="left:569.80px;top:38.26px;width:235.20px;height:19.28px;background:#c1d4f1;"></div>
<div class="r" style="left:576.60px;top:41.36px;width:11.200px;height:11.200px;border:1.800px solid #1f62c6;border-radius:2px;background:transparent"></div>
<div class="t" style="top:42.90px;font-size:12px;color:#2a2a2a;left:601.70px;">Casual shoes</div>
<div class="r" style="left:576.60px;top:60.64px;width:11.200px;height:11.200px;border:1.800px solid #6b6b6b;border-radius:2px;background:#fff"></div>
<div class="t" style="top:62.18px;font-size:12px;color:#2a2a2a;left:601.70px;">Formal shoes</div>
<div class="r" style="left:569.80px;top:76.82px;width:235.20px;height:19.28px;background:#c1d4f1;"></div>
<svg class="r" style="left:576.60px;top:79.92px" width="14.800" height="14.800" viewBox="0 0 14.800 14.800"><rect width="14.800" height="14.800" rx="2" fill="#1f62c6"/><path d="M2.800 7.800l3.100 3.100 6.200-7.300" fill="none" stroke="#fff" stroke-width="1.700"/></svg>
<div class="t" style="top:81.46px;font-size:12px;color:#2a2a2a;left:601.70px;">Sandals</div>
<div class="r" style="left:576.60px;top:99.20px;width:11.200px;height:11.200px;border:1.800px solid #6b6b6b;border-radius:2px;background:#fff"></div>
<div class="t" style="top:100.74px;font-size:12px;color:#2a2a2a;left:601.70px;">Slippers</div>
<div class="r" style="left:569.80px;top:115.38px;width:235.20px;height:19.28px;background:#c1d4f1;"></div>
<svg class="r" style="left:576.60px;top:118.48px" width="14.800" height="14.800" viewBox="0 0 14.800 14.800"><rect width="14.800" height="14.800" rx="2" fill="#1f62c6"/><path d="M2.800 7.800l3.100 3.100 6.200-7.300" fill="none" stroke="#fff" stroke-width="1.700"/></svg>
<div class="t" style="top:120.02px;font-size:12px;color:#2a2a2a;left:601.70px;">Heels</div>
<div class="r" style="left:576.60px;top:137.76px;width:11.200px;height:11.200px;border:1.800px solid #6b6b6b;border-radius:2px;background:#fff"></div>
<div class="r" style="left:569.80px;top:153.94px;width:235.20px;height:19.28px;background:#c1d4f1;"></div>
<div class="r" style="left:576.60px;top:157.04px;width:11.200px;height:11.200px;border:1.800px solid #1f62c6;border-radius:2px;background:transparent"></div>
<div class="r" style="left:576.60px;top:176.32px;width:11.200px;height:11.200px;border:1.800px solid #6b6b6b;border-radius:2px;background:#fff"></div>
<div class="r" style="left:569.80px;top:192.50px;width:235.20px;height:19.28px;background:#c1d4f1;"></div>
<div class="r" style="left:576.60px;top:195.60px;width:11.200px;height:11.200px;border:1.800px solid #1f62c6;border-radius:2px;background:transparent"></div>
<div class="r" style="left:576.60px;top:214.88px;width:11.200px;height:11.200px;border:1.800px solid #6b6b6b;border-radius:2px;background:#fff"></div>
<div class="r" style="left:569.80px;top:231.06px;width:235.20px;height:19.28px;background:#c1d4f1;"></div>
<div class="r" style="left:576.60px;top:234.16px;width:11.200px;height:11.200px;border:1.800px solid #1f62c6;border-radius:2px;background:transparent"></div>
<div class="r" style="left:823.70px;top:-0.20px;width:244.50px;height:19.10px;background:#3b3f58;"></div>
<div class="t" style="top:4.04px;font-size:12px;color:#fff;font-weight:700;left:910.72px;">TOILETRIES</div>
<div class="r" style="left:830.10px;top:22.08px;width:11.200px;height:11.200px;border:1.800px solid #6b6b6b;border-radius:2px;background:#fff"></div>
<div class="t" style="top:23.62px;font-size:12px;color:#2a2a2a;left:854.00px;">Toothbrush</div>
<div class="r" style="left:823.70px;top:38.26px;width:244.50px;height:19.28px;background:#c1d4f1;"></div>
<div class="r" style="left:830.10px;top:41.36px;width:11.200px;height:11.200px;border:1.800px solid #1f62c6;border-radius:2px;background:transparent"></div>
<div class="t" style="top:42.90px;font-size:12px;color:#2a2a2a;left:854.00px;">Toothpaste</div>
<div class="r" style="left:830.10px;top:60.64px;width:11.200px;height:11.200px;border:1.800px solid #6b6b6b;border-radius:2px;background:#fff"></div>
<div class="t" style="top:62.18px;font-size:12px;color:#2a2a2a;left:854.00px;">Dental floss</div>
<div class="r" style="left:823.70px;top:76.82px;width:244.50px;height:19.28px;background:#c1d4f1;"></div>
<div class="r" style="left:830.10px;top:79.92px;width:11.200px;height:11.200px;border:1.800px solid #1f62c6;border-radius:2px;background:transparent"></div>
<div class="t" style="top:81.46px;font-size:12px;color:#2a2a2a;left:854.00px;">Shampoo</div>
<div class="r" style="left:830.10px;top:99.20px;width:11.200px;height:11.200px;border:1.800px solid #6b6b6b;border-radius:2px;background:#fff"></div>
<div class="t" style="top:100.74px;font-size:12px;color:#2a2a2a;left:854.00px;">Conditioner</div>
<div class="r" style="left:823.70px;top:115.38px;width:244.50px;height:19.28px;background:#c1d4f1;"></div>
<svg class="r" style="left:830.10px;top:118.48px" width="14.800" height="14.800" viewBox="0 0 14.800 14.800"><rect width="14.800" height="14.800" rx="2" fill="#1f62c6"/><path d="M2.800 7.800l3.100 3.100 6.200-7.300" fill="none" stroke="#fff" stroke-width="1.700"/></svg>
<div class="t" style="top:120.02px;font-size:12px;color:#2a2a2a;left:854.00px;">Hairbrush</div>
<div class="r" style="left:830.10px;top:137.76px;width:11.200px;height:11.200px;border:1.800px solid #6b6b6b;border-radius:2px;background:#fff"></div>
<div class="t" style="top:139.30px;font-size:12px;color:#2a2a2a;left:854.00px;">Hairdryer</div>
<div class="r" style="left:823.70px;top:153.94px;width:244.50px;height:19.28px;background:#c1d4f1;"></div>
<div class="r" style="left:830.10px;top:157.04px;width:11.200px;height:11.200px;border:1.800px solid #1f62c6;border-radius:2px;background:transparent"></div>
<div class="r" style="left:830.10px;top:176.32px;width:11.200px;height:11.200px;border:1.800px solid #6b6b6b;border-radius:2px;background:#fff"></div>
<div class="r" style="left:823.70px;top:192.50px;width:244.50px;height:19.28px;background:#c1d4f1;"></div>
<div class="r" style="left:830.10px;top:195.60px;width:11.200px;height:11.200px;border:1.800px solid #1f62c6;border-radius:2px;background:transparent"></div>
<div class="r" style="left:830.10px;top:214.88px;width:11.200px;height:11.200px;border:1.800px solid #6b6b6b;border-radius:2px;background:#fff"></div>
<div class="r" style="left:823.70px;top:231.06px;width:244.50px;height:19.28px;background:#c1d4f1;"></div>
<div class="r" style="left:830.10px;top:234.16px;width:11.200px;height:11.200px;border:1.800px solid #1f62c6;border-radius:2px;background:transparent"></div>
<div class="r" style="left:1087.60px;top:-0.20px;width:230.00px;height:19.10px;background:#3b3f58;"></div>
<div class="t" style="top:4.04px;font-size:12px;color:#fff;font-weight:700;left:1150.70px;">PERSONAL CARE</div>
<div class="r" style="left:1093.60px;top:22.08px;width:11.200px;height:11.200px;border:1.800px solid #6b6b6b;border-radius:2px;background:#fff"></div>
<div class="t" style="top:23.62px;font-size:12px;color:#2a2a2a;left:1117.80px;">Deodorant</div>
<div class="r" style="left:1087.60px;top:38.26px;width:230.00px;height:19.28px;background:#c1d4f1;"></div>
<div class="r" style="left:1093.60px;top:41.36px;width:11.200px;height:11.200px;border:1.800px solid #1f62c6;border-radius:2px;background:transparent"></div>
<div class="t" style="top:42.90px;font-size:12px;color:#2a2a2a;left:1117.80px;">Perfume</div>
<div class="r" style="left:1093.60px;top:60.64px;width:11.200px;height:11.200px;border:1.800px solid #6b6b6b;border-radius:2px;background:#fff"></div>
<div class="t" style="top:62.18px;font-size:12px;color:#2a2a2a;left:1117.80px;">Moisturiser</div>
<div class="r" style="left:1087.60px;top:76.82px;width:230.00px;height:19.28px;background:#c1d4f1;"></div>
<div class="r" style="left:1093.60px;top:79.92px;width:11.200px;height:11.200px;border:1.800px solid #1f62c6;border-radius:2px;background:transparent"></div>
<div class="t" style="top:81.46px;font-size:12px;color:#2a2a2a;left:1117.80px;">Feminine hygiene</div>
<div class="r" style="left:1093.60px;top:99.20px;width:11.200px;height:11.200px;border:1.800px solid #6b6b6b;border-radius:2px;background:#fff"></div>
<div class="t" style="top:100.74px;font-size:12px;color:#2a2a2a;left:1117.80px;">Nail clippers</div>
<div class="r" style="left:1087.60px;top:115.38px;width:230.00px;height:19.28px;background:#c1d4f1;"></div>
<div class="r" style="left:1093.60px;top:118.48px;width:11.200px;height:11.200px;border:1.800px solid #1f62c6;border-radius:2px;background:transparent"></div>
<div class="t" style="top:120.02px;font-size:12px;color:#2a2a2a;left:1117.80px;">Tissues</div>
<div class="r" style="left:1093.60px;top:137.76px;width:11.200px;height:11.200px;border:1.800px solid #6b6b6b;border-radius:2px;background:#fff"></div>
<div class="t" style="top:139.30px;font-size:12px;color:#2a2a2a;left:1117.80px;">Lip balm</div>
<div class="r" style="left:1087.60px;top:153.94px;width:230.00px;height:19.28px;background:#c1d4f1;"></div>
<svg class="r" style="left:1093.60px;top:157.04px" width="14.800" height="14.800" viewBox="0 0 14.800 14.800"><rect width="14.800" height="14.800" rx="2" fill="#1f62c6"/><path d="M2.800 7.800l3.100 3.100 6.200-7.300" fill="none" stroke="#fff" stroke-width="1.700"/></svg>
<div class="t" style="top:158.58px;font-size:12px;color:#2a2a2a;left:1117.80px;">Quick drying towel</div>
<div class="r" style="left:1093.60px;top:176.32px;width:11.200px;height:11.200px;border:1.800px solid #6b6b6b;border-radius:2px;background:#fff"></div>
<div class="r" style="left:1087.60px;top:192.50px;width:230.00px;height:19.28px;background:#c1d4f1;"></div>
<div class="r" style="left:1093.60px;top:195.60px;width:11.200px;height:11.200px;border:1.800px solid #1f62c6;border-radius:2px;background:transparent"></div>
<div class="r" style="left:1093.60px;top:214.88px;width:11.200px;height:11.200px;border:1.800px solid #6b6b6b;border-radius:2px;background:#fff"></div>
<div class="r" style="left:1087.60px;top:231.06px;width:230.00px;height:19.28px;background:#c1d4f1;"></div>
<div class="r" style="left:1093.60px;top:234.16px;width:11.200px;height:11.200px;border:1.800px solid #1f62c6;border-radius:2px;background:transparent"></div>
</div>
<div class="r" style="left:1420.50px;top:344.50px;width:8.50px;height:725.50px;background:#fff;"></div>
<div class="r" style="left:1420.00px;top:344.50px;width:1.00px;height:715.00px;background:#e3e3e3;"></div>
<div class="r" style="left:1422.50px;top:346.00px;width:5.00px;height:24.00px;background:#dadce0;border-radius:3px"></div>
<div class="r" style="left:1420.50px;top:1030.00px;width:8.50px;height:29.50px;background:#f8f9fa;border-top:1px solid #dadce0;box-sizing:border-box"></div>
<div class="r" style="left:1420.50px;top:1044.50px;width:8.50px;height:1.00px;background:#dadce0;"></div>
<svg class="r" style="left:1422.500px;top:1035.500px" width="5" height="3" viewBox="0 0 6 4"><path d="M0 4h6L3 0z" fill="#80868b"/></svg>
<svg class="r" style="left:1422.500px;top:1051px" width="5" height="3" viewBox="0 0 6 4"><path d="M0 0h6L3 4z" fill="#80868b"/></svg>
<div class="r" style="left:16.00px;top:1059.50px;width:42.00px;height:10.50px;background:#f8f9fa;"></div>
<div class="r" style="left:58.00px;top:1059.50px;width:1371.00px;height:10.50px;background:#fff;"></div>
<div class="r" style="left:58.00px;top:1059.50px;width:1371.00px;height:1.00px;background:#e3e3e3;"></div>
<div class="r" style="left:60.00px;top:1060.90px;width:717.00px;height:7.70px;background:#dcdde1;border-radius:4px"></div>
<div class="r" style="left:1390.50px;top:1059.50px;width:1.00px;height:10.50px;background:#dadce0;"></div>
<div class="r" style="left:1405.50px;top:1059.50px;width:1.00px;height:10.50px;background:#dadce0;"></div>
<div class="r" style="left:1420.50px;top:1059.50px;width:1.00px;height:10.50px;background:#dadce0;"></div>
<svg class="r" style="left:1396.500px;top:1062.500px" width="3" height="5" viewBox="0 0 4 6"><path d="M4 0v6L0 3z" fill="#80868b"/></svg>
<svg class="r" style="left:1412px;top:1062.500px" width="3" height="5" viewBox="0 0 4 6"><path d="M0 0v6L4 3z" fill="#80868b"/></svg>
<div class="r" style="left:16px;top:1070px;width:1413px;height:35px;background:linear-gradient(#f1f2f3,#eeeeef 60%,#e8e8e9)"></div>
<div class="r" style="left:16.00px;top:1069.50px;width:1413.00px;height:1.00px;background:#e0e0e0;"></div>
<svg class="r" style="left:59.00px;top:1079.50px;" width="16" height="16" viewBox="0 0 24 24" fill="#444" ><path d="M19 13h-6v6h-2v-6H5v-2h6V5h2v6h6v2z"/></svg>
<svg class="r" style="left:87.70px;top:1079.50px;" width="16" height="16" viewBox="0 0 24 24" fill="#444" ><path d="M3 5h18v2H3zm0 4h18v2H3zm0 4h18v2H3zm0 4h18v2H3z"/></svg>
<div class="r" style="left:122.50px;top:1070.50px;width:1.00px;height:34.50px;background:#e3e3e3;"></div>
<div class="t" style="top:1081.07px;font-size:13.5px;color:#444;letter-spacing:0.572px;left:137.90px;-webkit-text-stroke:0.3px #444;">Instruction</div>
<svg class="r" style="left:214.32px;top:1086.16px" width="7.35" height="3.675" viewBox="0 0 8 4"><path d="M0 0h8L4 4z" fill="#666"/></svg>
<div class="r" style="left:237.500px;top:1070px;width:120.500px;height:35px;background:#fff;box-shadow:0 0 3px rgba(0,0,0,.18)"></div>
<div class="t" style="top:1081.07px;font-size:13.5px;color:#188038;font-weight:700;left:252.50px;transform:scaleX(0.9368);transform-origin:0 0;">Packing List</div>
<svg class="r" style="left:335.82px;top:1086.16px" width="7.35" height="3.675" viewBox="0 0 8 4"><path d="M0 0h8L4 4z" fill="#188038"/></svg>
<div class="t" style="top:1081.07px;font-size:13.5px;color:#444;letter-spacing:0.081px;left:373.80px;-webkit-text-stroke:0.3px #444;">Formula</div>
<svg class="r" style="left:432.32px;top:1086.16px" width="7.35" height="3.675" viewBox="0 0 8 4"><path d="M0 0h8L4 4z" fill="#666"/></svg>
<div class="r" style="left:455.50px;top:1070.50px;width:1.00px;height:34.50px;background:#e3e3e3;"></div>
<svg class="r" style="left:1344px;top:1079.500px" width="17" height="18" viewBox="0 0 17 18"><path d="M2 0h13a2 2 0 0 1 2 2v11a2 2 0 0 1-2 2h-4l-2.500 3L6 15H2a2 2 0 0 1-2-2V2a2 2 0 0 1 2-2z" fill="#5f6368"/><path d="M8.500 2.500l1.500 3.500 3.500 1.500-3.500 1.500-1.500 3.500L7 9 3.500 7.500 7 6z" fill="#fff"/></svg>
<svg class="r" style="left:1395.50px;top:1080.70px;" width="19" height="19" viewBox="0 0 24 24" fill="#444" ><path d="M15.410 7.410L14 6l-6 6 6 6 1.410-1.410L10.830 12z"/></svg>
</body></html>
